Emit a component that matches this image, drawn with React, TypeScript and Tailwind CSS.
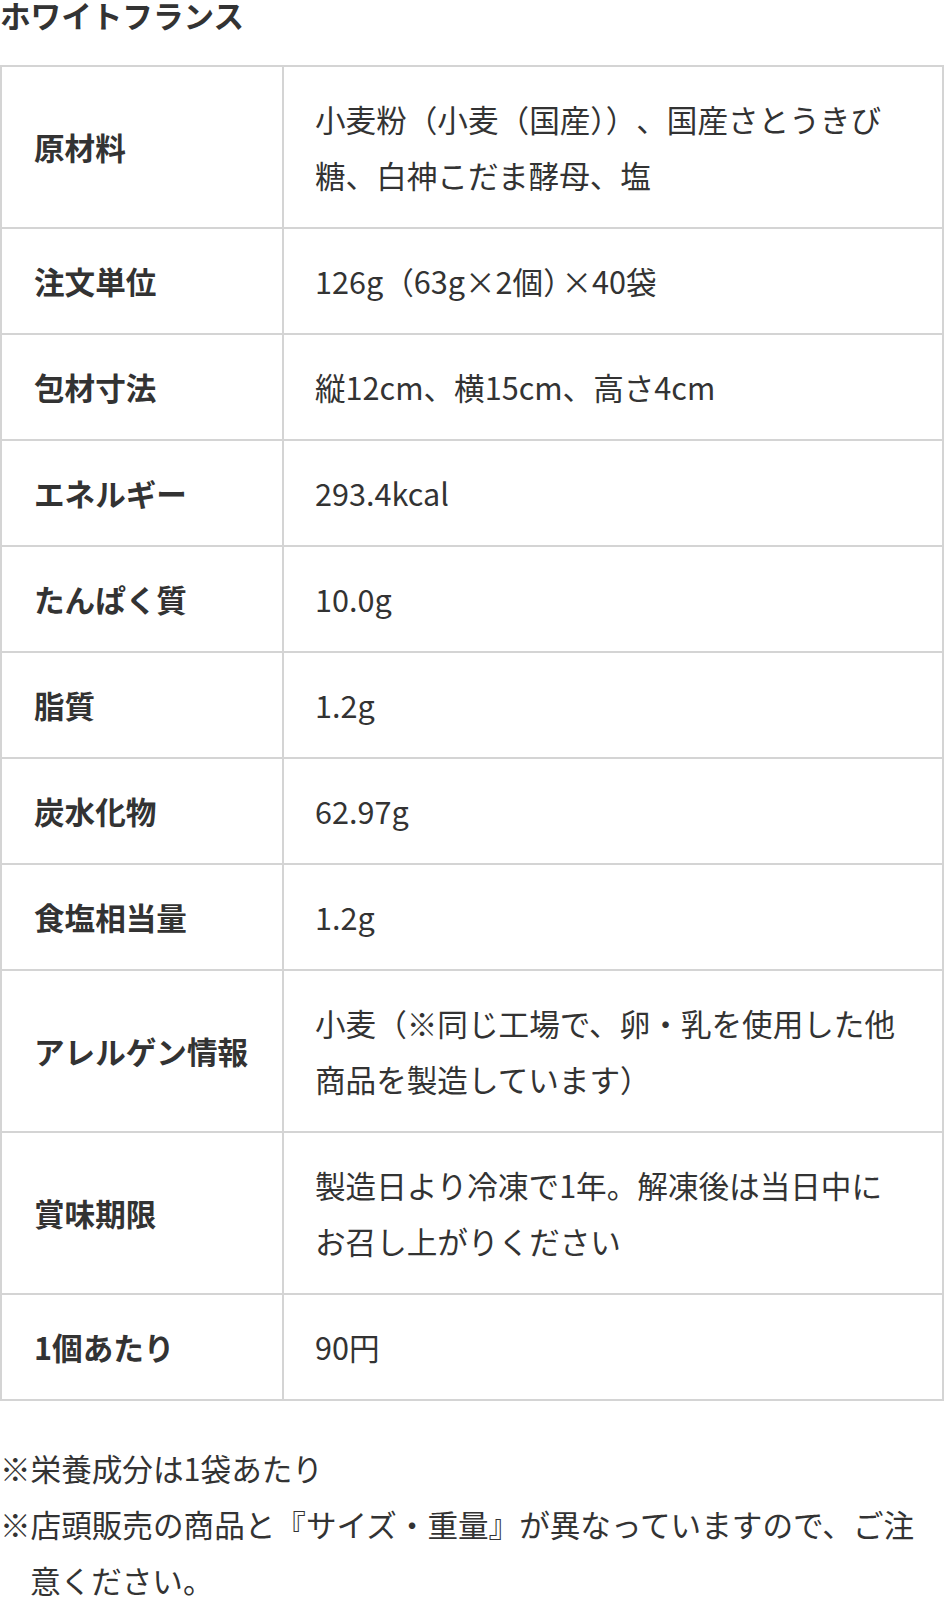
import React from "react";

const rows: { label: string; value: React.ReactNode }[] = [
    {
        label: "原材料",
        value: (
            <>
                小麦粉（小麦（国産<span className="tracking-[-0.5em]">）</span>）、国産さとうきび
                <br />
                糖、白神こだま酵母、塩
            </>
        ),
    },
    {
        label: "注文単位",
        value: (
            <>
                126g（63g×2個<span className="tracking-[-0.4em]">）</span>×40袋
            </>
        ),
    },
    { label: "包材寸法", value: "縦12cm、横15cm、高さ4cm" },
    { label: "エネルギー", value: "293.4kcal" },
    { label: "たんぱく質", value: "10.0g" },
    { label: "脂質", value: "1.2g" },
    { label: "炭水化物", value: "62.97g" },
    { label: "食塩相当量", value: "1.2g" },
    {
        label: "アレルゲン情報",
        value: (
            <>
                小麦（※同じ工場で、卵・乳を使用した他
                <br />
                商品を製造しています）
            </>
        ),
    },
    {
        label: "賞味期限",
        value: (
            <>
                製造日より冷凍で1年。解凍後は当日中に
                <br />
                お召し上がりください
            </>
        ),
    },
    { label: "1個あたり", value: "90円" },
];

export default function App() {
    return (
        <div
            className="w-[946px] bg-white text-[#333] text-[30.6px] [text-spacing-trim:space-all]"
            style={{ fontFamily: '"Noto Sans CJK JP", "Noto Sans", sans-serif' }}
        >
            <h2 className="font-bold leading-[30px] whitespace-nowrap">ホワイトフランス</h2>

            <table className="mt-[35px] w-[944px] border-collapse border-2 border-[#d4d4d4]">
                <tbody>
                    {rows.map((row) => (
                        <tr key={row.label}>
                            <th className="w-[282px] border-2 border-[#d4d4d4] pl-[32px] pr-4 py-6 text-left align-middle font-bold leading-[56px] whitespace-nowrap">
                                {row.label}
                            </th>
                            <td className="border-2 border-[#d4d4d4] pl-[31px] pr-4 py-6 align-middle font-normal leading-[56px] whitespace-nowrap">
                                {row.value}
                            </td>
                        </tr>
                    ))}
                </tbody>
            </table>

            <div className="mt-[39px] w-[920px] leading-[56px]">
                <p className="pl-[30px] -indent-[30px]">※栄養成分は1袋あたり</p>
                <p className="pl-[30px] -indent-[30px]">
                    ※店頭販売の商品と『サイズ・重量』が異なっていますので、ご注意ください。
                </p>
            </div>
        </div>
    );
}
